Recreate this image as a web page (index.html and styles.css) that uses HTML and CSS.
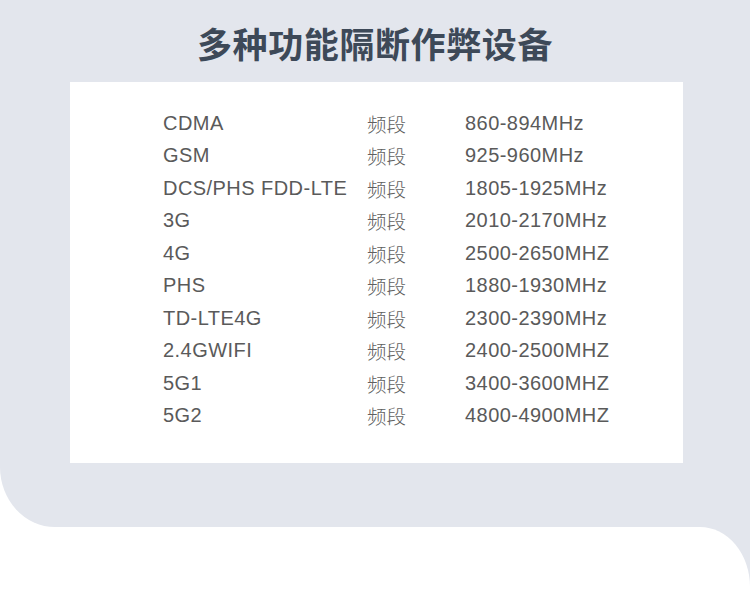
FILE: index.html
```html
<!DOCTYPE html>
<html lang="zh">
<head>
<meta charset="utf-8">
<link rel="stylesheet" href="styles.css">
</head>
<body>
<div class="top-wrap">
  <section class="panel">
    <h1 class="title">多种功能隔断作弊设备</h1>
    <div class="card">
      <div class="table">
        <span>CDMA</span><span class="cn">频段</span><span>860-894MHz</span>
        <span>GSM</span><span class="cn">频段</span><span>925-960MHz</span>
        <span>DCS/PHS FDD-LTE</span><span class="cn">频段</span><span>1805-1925MHz</span>
        <span>3G</span><span class="cn">频段</span><span>2010-2170MHz</span>
        <span>4G</span><span class="cn">频段</span><span>2500-2650MHZ</span>
        <span>PHS</span><span class="cn">频段</span><span>1880-1930MHz</span>
        <span>TD-LTE4G</span><span class="cn">频段</span><span>2300-2390MHz</span>
        <span>2.4GWIFI</span><span class="cn">频段</span><span>2400-2500MHZ</span>
        <span>5G1</span><span class="cn">频段</span><span>3400-3600MHZ</span>
        <span>5G2</span><span class="cn">频段</span><span>4800-4900MHZ</span>
      </div>
    </div>
  </section>
</div>
<div class="bottom-wrap">
  <div class="bottom"></div>
</div>
</body>
</html>
```
FILE: styles.css
```css
html, body {
  margin: 0;
  padding: 0;
  width: 750px;
  height: 589px;
  overflow: hidden;
  background: #ffffff;
  font-family: "Liberation Sans", "Noto Sans CJK SC", sans-serif;
}

.top-wrap {
  background: #ffffff;
}

.panel {
  background: #e3e6ed;
  height: 527px;
  box-sizing: border-box;
  padding-top: 18px;
  border-bottom-left-radius: 55px 60px;
}

.title {
  margin: 0;
  text-align: center;
  font-family: "Noto Sans CJK SC", sans-serif;
  font-weight: 700;
  font-size: 35px;
  line-height: 50px;
  letter-spacing: 0.6px;
  color: #3d4958;
}

.card {
  margin: 14px 0 0 70px;
  width: 613px;
  height: 381px;
  background: #ffffff;
  box-sizing: border-box;
  padding: 25px 0 0 93px;
}

.table {
  display: grid;
  grid-template-columns: 204px 98px 1fr;
  grid-auto-rows: 32.5px;
  align-items: center;
  font-size: 20px;
  letter-spacing: 0.45px;
  color: #5a5a5a;
}

.table .cn {
  font-family: "Noto Sans CJK SC", sans-serif;
  font-weight: 300;
  font-size: 19.5px;
  letter-spacing: 0;
  color: #606060;
}

.bottom-wrap {
  background: #e3e6ed;
  height: 62px;
}

.bottom {
  background: #ffffff;
  height: 62px;
  border-top-right-radius: 50px 60px;
}
```
